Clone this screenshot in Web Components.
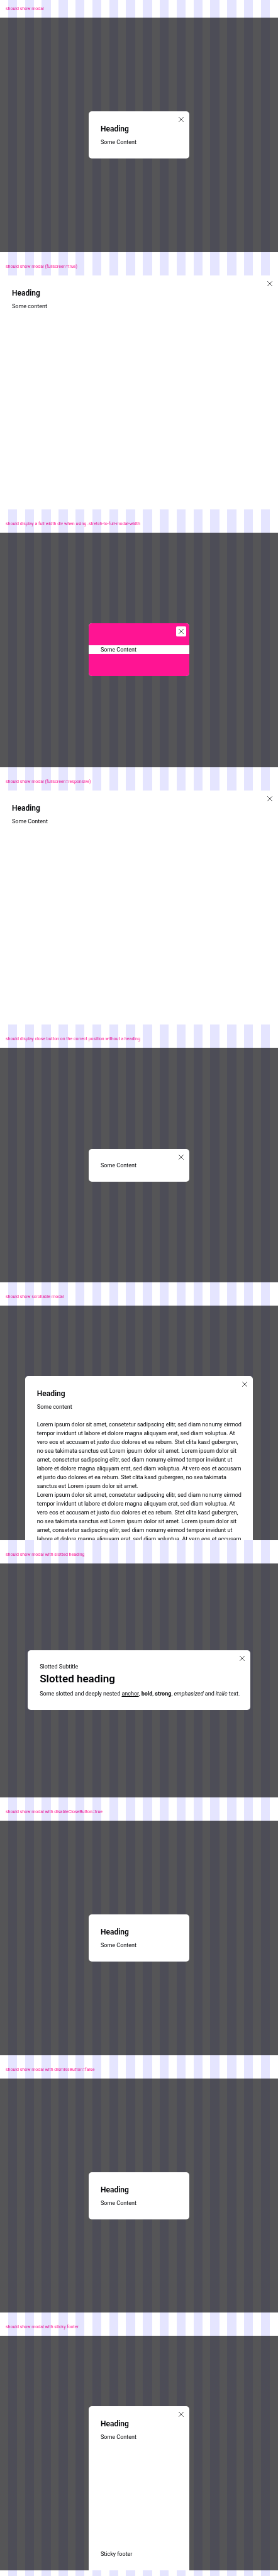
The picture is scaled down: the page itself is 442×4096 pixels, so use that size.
<!DOCTYPE html>
<html lang="en">
<head>
<meta charset="utf-8">
<title>Modal overview</title>
<style>
  html { background: #fff; }
  body {
    margin: 0;
    min-height: 100vh;
    display: grid;
    grid-auto-rows: 1fr;
    font: 9px/14px Roboto, "Liberation Sans", sans-serif;
    color: #010205;
    /* column guides of the layout grid */
    background: repeating-linear-gradient(90deg,
      #e5e5ff 2.895% 6.134%, #fff 6.134% 8.959%);
  }
  p { margin: 0; }
  a { color: inherit; }
  .lines { white-space: nowrap; }
  .title { margin: 0; font-size: 17px; line-height: 24px; font-weight: 600; }
</style>
</head>
<body>

<template id="story-template">
  <style>
    :host {
      display: flex;
      flex-direction: column;
      min-height: 360px;
      min-width: 0;
      padding-bottom: 9px;
      box-sizing: border-box;
    }
    h2 {
      margin: 0;
      padding: 0 9px;
      font-size: 7px;
      line-height: 28px;
      font-weight: 400;
      color: deeppink;
      mix-blend-mode: multiply;
    }
    .stage {
      flex: 1;
      contain: size;
      display: grid;
      grid-template-columns: minmax(0, 1fr);
      place-items: center;
      overflow: hidden;
      background: rgba(1, 2, 5, .67);
    }
  </style>
  <h2></h2>
  <div class="stage"><slot></slot></div>
</template>

<template id="modal-template">
  <style>
    :host {
      position: relative;
      display: flex;
      flex-direction: column;
      box-sizing: border-box;
      min-width: 160px;
      padding: 19px;
      border-radius: 5px;
      background: #fff;
      overflow: hidden;
    }
    :host([fullscreen]) { place-self: stretch; border-radius: 0; }
    :host([wide]) { width: 80%; }
    :host([tall]) { align-self: stretch; margin-top: 112px; border-radius: 5px 5px 0 0; }
    :host([scroll]) { width: 82%; }
    h3 { margin: 0 0 5px; font-size: 12px; line-height: 18px; font-weight: 600; }
    .head { margin-bottom: 5px; }
    .foot { margin-top: auto; }
    [hidden] { display: none; }
    button {
      position: absolute;
      top: 5px;
      right: 5px;
      width: 16px;
      height: 16px;
      padding: 0;
      border: 0;
      border-radius: 2px;
      background: #fff;
      color: inherit;
      display: grid;
      place-items: center;
    }
    button[hidden] { display: none; }
    svg { width: 8px; height: 8px; display: block; }
  </style>
  <h3></h3>
  <div class="head"><slot name="heading"></slot></div>
  <slot></slot>
  <div class="foot"><slot name="footer"></slot></div>
  <button type="button" aria-label="Close">
    <svg viewBox="0 0 14 14" fill="none" stroke="currentColor" stroke-width="1.4" aria-hidden="true"><path d="M.4.4l13.2 13.2M13.6.4L.4 13.6"/></svg>
  </button>
</template>

<template id="band-template">
  <style>
    :host { display: block; margin: 0 -19px; height: 35px; background: deeppink; }
    :host([first]) { margin-top: -19px; }
    :host([last]) { margin-bottom: -19px; }
  </style>
</template>

<modal-story label="should show modal">
  <demo-modal heading="Heading"><p>Some Content</p></demo-modal>
</modal-story>

<modal-story label="should show modal (fullscreen=true)">
  <demo-modal fullscreen heading="Heading"><p>Some content</p></demo-modal>
</modal-story>

<modal-story label="should display a full width div when using .stretch-to-full-modal-width">
  <demo-modal><full-band first></full-band><p>Some Content</p><full-band last></full-band></demo-modal>
</modal-story>

<modal-story label="should show modal (fullscreen=responsive)">
  <demo-modal fullscreen heading="Heading"><p>Some Content</p></demo-modal>
</modal-story>

<modal-story label="should display close button on the correct position without a heading">
  <demo-modal><p>Some Content</p></demo-modal>
</modal-story>

<modal-story label="should show scrollable modal">
  <demo-modal tall scroll heading="Heading">
    <p class="lines">Some content<br><br>
      Lorem ipsum dolor sit amet, consetetur sadipscing elitr, sed diam nonumy eirmod<br>
      tempor invidunt ut labore et dolore magna aliquyam erat, sed diam voluptua. At<br>
      vero eos et accusam et justo duo dolores et ea rebum. Stet clita kasd gubergren,<br>
      no sea takimata sanctus est Lorem ipsum dolor sit amet. Lorem ipsum dolor sit<br>
      amet, consetetur sadipscing elitr, sed diam nonumy eirmod tempor invidunt ut<br>
      labore et dolore magna aliquyam erat, sed diam voluptua. At vero eos et accusam<br>
      et justo duo dolores et ea rebum. Stet clita kasd gubergren, no sea takimata<br>
      sanctus est Lorem ipsum dolor sit amet.<br>
      Lorem ipsum dolor sit amet, consetetur sadipscing elitr, sed diam nonumy eirmod<br>
      tempor invidunt ut labore et dolore magna aliquyam erat, sed diam voluptua. At<br>
      vero eos et accusam et justo duo dolores et ea rebum. Stet clita kasd gubergren,<br>
      no sea takimata sanctus est Lorem ipsum dolor sit amet. Lorem ipsum dolor sit<br>
      amet, consetetur sadipscing elitr, sed diam nonumy eirmod tempor invidunt ut<br>
      labore et dolore magna aliquyam erat, sed diam voluptua. At vero eos et accusam</p>
  </demo-modal>
</modal-story>

<modal-story label="should show modal with slotted heading">
  <demo-modal wide>
    <p slot="heading">Slotted Subtitle</p>
    <h3 class="title" slot="heading">Slotted heading</h3>
    <p class="lines">Some slotted and deeply nested <a href="#">anchor</a>, <b>bold</b>, <strong>strong</strong>, <em>emphasized</em> and <i>italic</i> text.</p>
  </demo-modal>
</modal-story>

<modal-story label="should show modal with disableCloseButton=true">
  <demo-modal no-close heading="Heading"><p>Some Content</p></demo-modal>
</modal-story>

<modal-story label="should show modal with dismissButton=false">
  <demo-modal no-close heading="Heading"><p>Some Content</p></demo-modal>
</modal-story>

<modal-story label="should show modal with sticky footer">
  <demo-modal tall heading="Heading"><p>Some Content</p><p slot="footer">Sticky footer</p></demo-modal>
</modal-story>

<script>
  const stamp = (host, id) => {
    const root = host.attachShadow({ mode: "open" });
    root.append(document.getElementById(id).content.cloneNode(true));
    return root;
  };

  customElements.define("modal-story", class extends HTMLElement {
    constructor() {
      super();
      stamp(this, "story-template").querySelector("h2").textContent = this.getAttribute("label");
    }
  });

  customElements.define("demo-modal", class extends HTMLElement {
    constructor() {
      super();
      const root = stamp(this, "modal-template");
      const title = root.querySelector("h3");
      title.textContent = this.getAttribute("heading") || "";
      title.hidden = !this.hasAttribute("heading");
      root.querySelector(".head").hidden = !this.querySelector("[slot=heading]");
      root.querySelector(".foot").hidden = !this.querySelector("[slot=footer]");
      root.querySelector("button").hidden = this.hasAttribute("no-close");
    }
    connectedCallback() {
      this.setAttribute("role", "dialog");
    }
  });

  customElements.define("full-band", class extends HTMLElement {
    constructor() {
      super();
      stamp(this, "band-template");
    }
  });
</script>
</body>
</html>
